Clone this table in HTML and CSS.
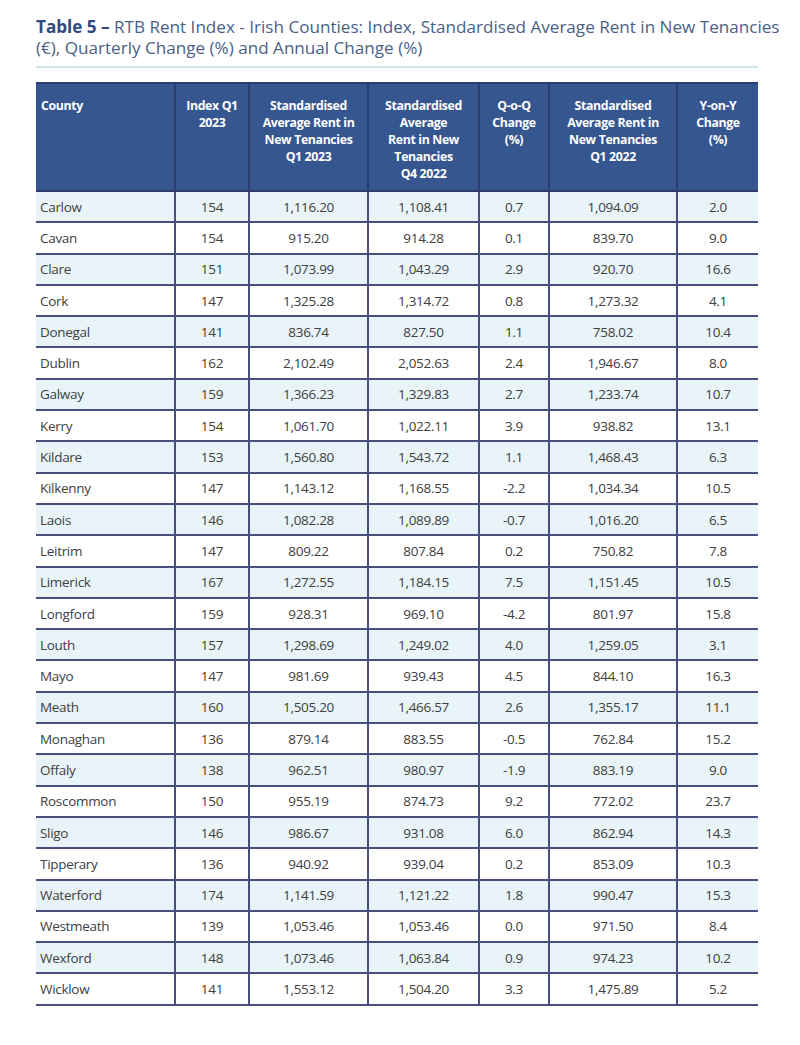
FILE: index.html
```html
<!DOCTYPE html>
<html>
<head>
<meta charset="utf-8">
<link rel="stylesheet" href="styles.css">
</head>
<body>
<div class="page">
  <h1 class="title"><b class="lbl">Table 5 –</b> RTB Rent Index - Irish Counties: Index, Standardised Average Rent in New Tenancies<br>(€), Quarterly Change (%) and Annual Change (%)</h1>
  <div class="rule"></div>
  <table class="rent">
    <colgroup>
      <col class="c1"><col class="c2"><col class="c3"><col class="c4"><col class="c5"><col class="c6"><col class="c7">
    </colgroup>
    <thead>
      <tr>
        <th class="left">County</th>
        <th>Index Q1<br>2023</th>
        <th>Standardised<br>Average Rent in<br>New Tenancies<br>Q1 2023</th>
        <th>Standardised<br>Average<br>Rent in New<br>Tenancies<br>Q4 2022</th>
        <th>Q-o-Q<br>Change<br>(%)</th>
        <th>Standardised<br>Average Rent in<br>New Tenancies<br>Q1 2022</th>
        <th>Y-on-Y<br>Change<br>(%)</th>
      </tr>
    </thead>
    <tbody>
      <tr><td>Carlow</td><td>154</td><td>1,116.20</td><td>1,108.41</td><td>0.7</td><td>1,094.09</td><td>2.0</td></tr>
      <tr><td>Cavan</td><td>154</td><td>915.20</td><td>914.28</td><td>0.1</td><td>839.70</td><td>9.0</td></tr>
      <tr><td>Clare</td><td>151</td><td>1,073.99</td><td>1,043.29</td><td>2.9</td><td>920.70</td><td>16.6</td></tr>
      <tr><td>Cork</td><td>147</td><td>1,325.28</td><td>1,314.72</td><td>0.8</td><td>1,273.32</td><td>4.1</td></tr>
      <tr><td>Donegal</td><td>141</td><td>836.74</td><td>827.50</td><td>1.1</td><td>758.02</td><td>10.4</td></tr>
      <tr><td>Dublin</td><td>162</td><td>2,102.49</td><td>2,052.63</td><td>2.4</td><td>1,946.67</td><td>8.0</td></tr>
      <tr><td>Galway</td><td>159</td><td>1,366.23</td><td>1,329.83</td><td>2.7</td><td>1,233.74</td><td>10.7</td></tr>
      <tr><td>Kerry</td><td>154</td><td>1,061.70</td><td>1,022.11</td><td>3.9</td><td>938.82</td><td>13.1</td></tr>
      <tr><td>Kildare</td><td>153</td><td>1,560.80</td><td>1,543.72</td><td>1.1</td><td>1,468.43</td><td>6.3</td></tr>
      <tr><td>Kilkenny</td><td>147</td><td>1,143.12</td><td>1,168.55</td><td>-2.2</td><td>1,034.34</td><td>10.5</td></tr>
      <tr><td>Laois</td><td>146</td><td>1,082.28</td><td>1,089.89</td><td>-0.7</td><td>1,016.20</td><td>6.5</td></tr>
      <tr><td>Leitrim</td><td>147</td><td>809.22</td><td>807.84</td><td>0.2</td><td>750.82</td><td>7.8</td></tr>
      <tr><td>Limerick</td><td>167</td><td>1,272.55</td><td>1,184.15</td><td>7.5</td><td>1,151.45</td><td>10.5</td></tr>
      <tr><td>Longford</td><td>159</td><td>928.31</td><td>969.10</td><td>-4.2</td><td>801.97</td><td>15.8</td></tr>
      <tr><td>Louth</td><td>157</td><td>1,298.69</td><td>1,249.02</td><td>4.0</td><td>1,259.05</td><td>3.1</td></tr>
      <tr><td>Mayo</td><td>147</td><td>981.69</td><td>939.43</td><td>4.5</td><td>844.10</td><td>16.3</td></tr>
      <tr><td>Meath</td><td>160</td><td>1,505.20</td><td>1,466.57</td><td>2.6</td><td>1,355.17</td><td>11.1</td></tr>
      <tr><td>Monaghan</td><td>136</td><td>879.14</td><td>883.55</td><td>-0.5</td><td>762.84</td><td>15.2</td></tr>
      <tr><td>Offaly</td><td>138</td><td>962.51</td><td>980.97</td><td>-1.9</td><td>883.19</td><td>9.0</td></tr>
      <tr><td>Roscommon</td><td>150</td><td>955.19</td><td>874.73</td><td>9.2</td><td>772.02</td><td>23.7</td></tr>
      <tr><td>Sligo</td><td>146</td><td>986.67</td><td>931.08</td><td>6.0</td><td>862.94</td><td>14.3</td></tr>
      <tr><td>Tipperary</td><td>136</td><td>940.92</td><td>939.04</td><td>0.2</td><td>853.09</td><td>10.3</td></tr>
      <tr><td>Waterford</td><td>174</td><td>1,141.59</td><td>1,121.22</td><td>1.8</td><td>990.47</td><td>15.3</td></tr>
      <tr><td>Westmeath</td><td>139</td><td>1,053.46</td><td>1,053.46</td><td>0.0</td><td>971.50</td><td>8.4</td></tr>
      <tr><td>Wexford</td><td>148</td><td>1,073.46</td><td>1,063.84</td><td>0.9</td><td>974.23</td><td>10.2</td></tr>
      <tr><td>Wicklow</td><td>141</td><td>1,553.12</td><td>1,504.20</td><td>3.3</td><td>1,475.89</td><td>5.2</td></tr>
    </tbody>
  </table>
</div>
</body>
</html>
```
FILE: styles.css
```css
html, body {
  margin: 0;
  padding: 0;
  background: #ffffff;
}
.page {
  padding: 16px 0 0 36px;
  width: 722px;
  font-family: "Open Sans", "Noto Sans", sans-serif;
}
.title {
  margin: 0;
  width: 760px;
  font-size: 17.1px;
  line-height: 21px;
  font-weight: 400;
  color: #4b5f85;
  letter-spacing: 0;
  white-space: nowrap;
}
.title .lbl {
  font-weight: 700;
  color: #2e4a80;
}
.rule {
  margin-top: 8px;
  height: 2px;
  background: #cde6ee;
}
.rent {
  margin-top: 14px;
  width: 722px;
  border-collapse: collapse;
  table-layout: fixed;
}
.c1 { width: 139px; }
.c2 { width: 74px; }
.c3 { width: 119px; }
.c4 { width: 111px; }
.c5 { width: 70px; }
.c6 { width: 128px; }
.c7 { width: 81px; }
.rent thead th {
  background: #36568f;
  color: #ffffff;
  font-size: 12.3px;
  line-height: 17px;
  font-weight: 700;
  letter-spacing: -0.35px;
  text-align: center;
  vertical-align: top;
  padding: 13px 2px 0;
  height: 93px;
  white-space: nowrap;
  border-top: 2px solid #2a3d70;
  border-left: 2px solid #2a3d6e;
}
.rent thead th.left {
  text-align: left;
  padding-left: 5px;
  border-left: none;
}
.rent tbody td {
  height: 29.3px;
  padding: 0;
  font-size: 13.5px;
  color: #404040;
  letter-spacing: -0.3px;
  text-align: center;
  vertical-align: middle;
  border-bottom: 2px solid #474f7e;
  border-left: 2px solid #474f7e;
}
.rent tbody td:first-child {
  text-align: left;
  padding-left: 4px;
  border-left: none;
}
.rent thead tr {
  border-bottom: 2px solid #2f3b6c;
}
.rent tbody tr:nth-child(odd) td {
  background: #e8f4f8;
}
.rent tbody tr:nth-child(even) td {
  background: #ffffff;
}
```
